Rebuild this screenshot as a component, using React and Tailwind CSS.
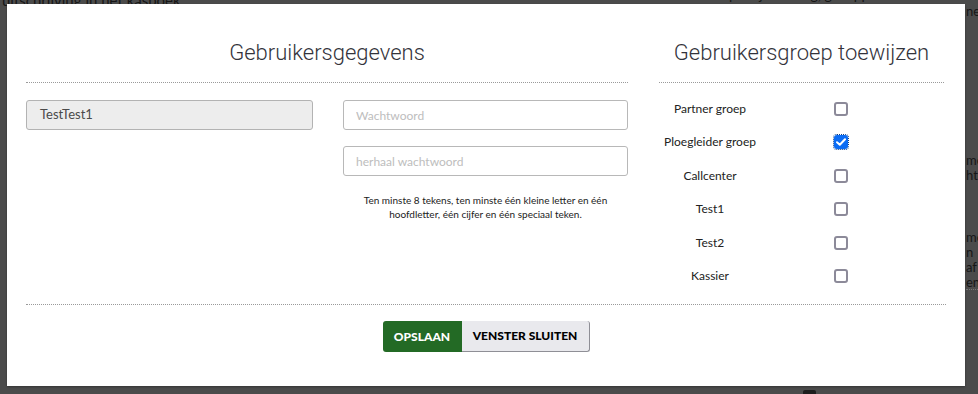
import React, { useState } from 'react';

const groups = [
  { name: 'Partner groep', checked: false },
  { name: 'Ploegleider groep', checked: true },
  { name: 'Callcenter', checked: false },
  { name: 'Test1', checked: false },
  { name: 'Test2', checked: false },
  { name: 'Kassier', checked: false },
];

const Checkbox = ({ checked, onChange }) => {
  if (checked) {
    return (
      <button
        type="button"
        onClick={onChange}
        className="w-[14px] h-[14px] rounded-[3px] bg-[#0b6cf4] flex items-center justify-center outline-1 outline-dotted outline-[#0b3f8a]"
      >
        <svg width="10" height="8" viewBox="0 0 10 8" fill="none">
          <path d="M1 4.2 L3.8 6.8 L9 1.2" stroke="white" strokeWidth="2" strokeLinecap="round" strokeLinejoin="round" />
        </svg>
      </button>
    );
  }
  return (
    <button
      type="button"
      onClick={onChange}
      className="w-[14px] h-[14px] rounded-[3px] border-2 border-[#8c8a99] bg-white"
    />
  );
};

const App = () => {
  const [checks, setChecks] = useState(groups.map((g) => g.checked));

  const toggle = (i) => {
    setChecks(checks.map((c, j) => (j === i ? !c : c)));
  };

  return (
    <div className="relative w-[978px] h-[394px] overflow-hidden bg-[#4b4b4b] font-['Lato','Open_Sans',sans-serif]">
      {/* page behind the overlay */}
      <div className="absolute left-[2px] top-[-9px] text-[15px] leading-[18px] text-[#161616]">uitschrijving in het kasboek.</div>
      <div className="absolute left-[640px] top-[-14px] text-[14px] leading-[18px] text-[#161616] whitespace-nowrap">
        van de kassa op de juiste dag, gekoppeld aan de
      </div>
      <div className="absolute left-[966px] top-[3px] text-[13px] leading-[16px] text-[#161616]">ne</div>
      <div className="absolute left-[966px] top-[153px] text-[13px] leading-[15px] text-[#161616]">
        me<br />hte
      </div>
      <div className="absolute left-[966px] top-[230px] text-[13px] leading-[15px] text-[#161616]">
        me<br />n af<br />en
      </div>
      <div className="absolute left-[966px] top-[289px] w-[12px] border-t border-dotted border-[#777]" />
      <div className="absolute left-[803px] top-[390px] w-[13px] h-[6px] rounded-t-[2px] bg-[#1d1d1d]" />

      {/* modal */}
      <div className="absolute left-[7px] top-[4px] w-[958px] h-[382px] bg-white px-[19px] pt-[34px] shadow-[0_1px_2px_rgba(0,0,0,0.3)]">
        <div className="flex gap-[31px]">
          {/* Gebruikersgegevens */}
          <div className="w-[602px]">
            <h2 className="text-center text-[22px] leading-[30px] font-light text-[#33333b] font-['Roboto',sans-serif]">
              Gebruikersgegevens
            </h2>
            <div className="mt-[14px] border-t border-dotted border-[#9a9a9a]" />
            <div className="mt-[17px] flex gap-[30px]">
              <div className="w-[287px]">
                <div className="h-[30px] rounded-[3px] border border-[#b3b3b3] bg-[#ededed] px-[13px] flex items-center text-[13px] text-[#4a4a4a]">
                  TestTest1
                </div>
              </div>
              <div className="w-[285px]">
                <input
                  type="password"
                  placeholder="Wachtwoord"
                  className="w-full h-[30px] rounded-[3px] border border-[#b8b8b8] px-[12px] text-[12px] placeholder:text-[#bdbdbd] outline-none"
                />
                <input
                  type="password"
                  placeholder="herhaal wachtwoord"
                  className="mt-[16px] w-full h-[30px] rounded-[3px] border border-[#b8b8b8] px-[12px] text-[12px] placeholder:text-[#bdbdbd] outline-none"
                />
                <p className="mt-[17px] text-center text-[10px] leading-[14px] text-[#222]">
                  Ten minste 8 tekens, ten minste één kleine letter en één
                  <br />
                  hoofdletter, één cijfer en één speciaal teken.
                </p>
              </div>
            </div>
          </div>

          {/* Gebruikersgroep toewijzen */}
          <div className="w-[285px]">
            <h2 className="text-center text-[22px] leading-[30px] font-light text-[#33333b] font-['Roboto',sans-serif] whitespace-nowrap">
              Gebruikersgroep toewijzen
            </h2>
            <div className="mt-[14px] border-t border-dotted border-[#9a9a9a]" />
            <div className="mt-[9px] flex flex-col">
              {groups.map((g, i) => (
                <div key={g.name} className="h-[33.5px] flex items-center">
                  <span className="w-[102px] text-center text-[12px] text-[#222] whitespace-nowrap">{g.name}</span>
                  <div className="ml-[73px] flex">
                    <Checkbox checked={checks[i]} onChange={() => toggle(i)} />
                  </div>
                </div>
              ))}
            </div>
          </div>
        </div>

        <div className="mt-[11px] border-t border-dotted border-[#9a9a9a]" />

        <div className="mt-[16px] flex justify-center">
          <button
            type="button"
            className="w-[79px] h-[31px] rounded-l-[3px] bg-[#236a25] text-white text-[12px] font-black"
          >
            OPSLAAN
          </button>
          <button
            type="button"
            className="w-[128px] h-[31px] rounded-r-[3px] bg-[#e9e9ed] border-r border-b border-[#8f8f96] text-black text-[12px] font-black"
          >
            VENSTER SLUITEN
          </button>
        </div>
      </div>
    </div>
  );
};

export default App;
